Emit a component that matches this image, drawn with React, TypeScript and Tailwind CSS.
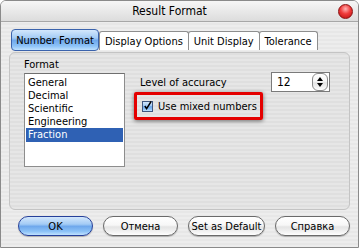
import React from 'react';

const font = { fontFamily: '"DejaVu Sans Condensed", "Liberation Sans", sans-serif' };

const stripes =
  'bg-[repeating-linear-gradient(0deg,#ededed_0px,#ededed_2px,#e7e7e7_2px,#e7e7e7_4px)]';
const panelStripes =
  'bg-[repeating-linear-gradient(0deg,#e6e6e6_0px,#e6e6e6_2px,#dfdfdf_2px,#dfdfdf_4px)]';
const aqua =
  'bg-[linear-gradient(to_bottom,#d3e7fc_0%,#a3cbf5_40%,#6fa8ec_52%,#8cc2f7_80%,#c0e2ff_100%)]';
const glass =
  'bg-[linear-gradient(to_bottom,#ffffff_0%,#f7f7f7_45%,#e4e4e4_55%,#f4f4f4_85%,#ffffff_100%)]';

const formats = ['General', 'Decimal', 'Scientific', 'Engineering', 'Fraction'];

function Tab({ label, active }: { label: string; active?: boolean }) {
  if (active) {
    return (
      <div
        className={`flex h-[22px] w-[88px] items-center justify-center rounded-[4px] border border-[#3b63ac] ${aqua} text-black`}
      >
        {label}
      </div>
    );
  }
  return (
    <div className="-ml-px flex h-[19px] items-center rounded-t-[3px] border border-b-0 border-[#8e8e8e] bg-white px-[5px] text-black">
      {label}
    </div>
  );
}

function PillButton({ label, primary, w }: { label: string; primary?: boolean; w: string }) {
  return (
    <button
      className={`flex h-[20px] ${w} items-center justify-center rounded-full border ${
        primary ? `border-[#26409a] ${aqua}` : `border-[#6a6a6a] ${glass}`
      } text-black shadow-[0_1px_1px_rgba(0,0,0,0.25)]`}
    >
      {label}
    </button>
  );
}

export default function App() {
  return (
    <div className="h-[249px] w-[359px] bg-white text-[11px] leading-[13px]" style={font}>
      <div className="flex h-[248px] w-[359px] flex-col overflow-hidden rounded-t-[6px] border border-[#8a8a8a]">
        <div className="flex h-[21px] shrink-0 items-center border-b border-[#a7a7a7] bg-[linear-gradient(to_bottom,#f6f6f6,#dcdcdc)]">
          <div className="flex-1 text-center text-[12px] text-black">Result Format</div>
          <div className="mr-[5px] h-[15px] w-[15px] rounded-full border border-[#8a1010] bg-[radial-gradient(circle_at_50%_30%,#ffb4b4_0%,#f03a3a_45%,#b80d0d_100%)]" />
        </div>
        <div className={`flex flex-1 flex-col px-[8px] pt-[7px] ${stripes}`}>
          <div className="flex h-[22px] items-end pl-[2px]">
            <Tab label="Number Format" active />
            <div className="flex items-end pb-[1px]">
              <div className="ml-px" />
              <Tab label="Display Options" />
              <Tab label="Unit Display" />
              <Tab label="Tolerance" />
            </div>
          </div>
          <div
            className={`mt-px flex h-[158px] w-[341px] rounded-[6px] border border-[#c4c4c4] ${panelStripes}`}
          >
            <div className="ml-[14px] flex w-[101px] flex-col pt-[5px]">
              <div className="h-[13px] text-black">Format</div>
              <div className="mt-[2px] flex h-[94px] flex-col border border-[#8d8d8d] border-t-[#6f6f6f] bg-white px-px pt-[2px]">
                {formats.map((f) => (
                  <div
                    key={f}
                    className={`h-[13px] pl-[2px] ${
                      f === 'Fraction' ? 'h-[14px] bg-[#2f61b4] text-white' : 'text-black'
                    }`}
                  >
                    {f}
                  </div>
                ))}
              </div>
            </div>
            <div className="ml-[9px] flex flex-col pt-[19px]">
              <div className="flex h-[20px] items-center">
                <div className="w-[137px] pl-[6px] text-black">Level of accuracy</div>
                <div className="flex h-[20px] w-[59px] items-center border border-[#7a7a7a] bg-white pl-[5px] pr-px">
                  <span className="flex-1 text-[12px] text-black">12</span>
                  <div className={`flex h-[18px] w-[16px] flex-col items-center justify-center gap-[2px] rounded-[6px] border border-[#8a8a8a] ${glass}`}>
                    <svg width="6" height="4" viewBox="0 0 6 4">
                      <path d="M3 0 L6 4 L0 4 Z" fill="#000" />
                    </svg>
                    <svg width="6" height="4" viewBox="0 0 6 4">
                      <path d="M0 0 L6 0 L3 4 Z" fill="#000" />
                    </svg>
                  </div>
                </div>
              </div>
              <div className="flex h-[28px] w-[129px] items-center rounded-[2px] border-[3px] border-[#e40000] pl-[5px] shadow-[0_1px_4px_rgba(0,0,0,0.55)]">
                <div className={`flex h-[11px] w-[11px] items-center justify-center border border-[#3f5780] ${aqua}`}>
                  <svg width="10" height="10" viewBox="0 0 10 10">
                    <path d="M2 5 L4 8 L9 0" fill="none" stroke="#000" strokeWidth="1.6" />
                  </svg>
                </div>
                <span className="ml-[5px] text-black">Use mixed numbers</span>
              </div>
            </div>
          </div>
          <div className="mt-[6px] flex gap-[10px] pl-[9px]">
            <PillButton label="OK" primary w="w-[75px]" />
            <PillButton label="Отмена" w="w-[75px]" />
            <PillButton label="Set as Default" w="w-[77px]" />
            <PillButton label="Справка" w="w-[75px]" />
          </div>
        </div>
      </div>
    </div>
  );
}
